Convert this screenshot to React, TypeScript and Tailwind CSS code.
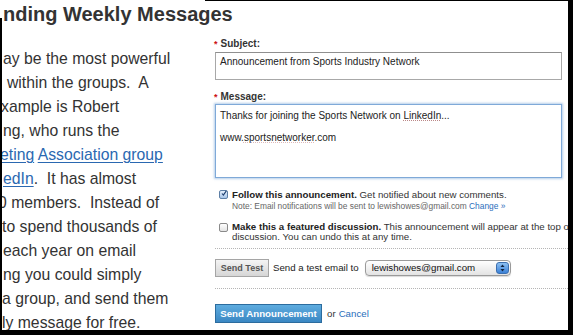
import React from "react";

const sans = { fontFamily: '"Liberation Sans", Arial, Helvetica, sans-serif' };

function Line({ ml, children }: { ml: string; children: React.ReactNode }) {
  return <div className={`whitespace-nowrap ${ml}`}>{children}</div>;
}

export default function App() {
  const link = "text-[#2a68b1] underline decoration-[1px] underline-offset-[2px]";
  return (
    <div className="w-[573px] h-[335px] bg-black pr-[5px] pb-[5px]" style={sans}>
      <div className="w-full h-full bg-white flex text-[#333]">
        {/* Left column */}
        <div className="w-[205px] shrink-0 flex flex-col">
          <div className="h-[18px] pl-[3px] pt-[4px] whitespace-nowrap text-[20px] leading-[20px] font-bold text-[#333]">
            nding Weekly Messages
          </div>
          <div className="flex-1 border-l-2 border-black overflow-hidden pt-[29px] text-[15.75px] leading-[24px] text-[#333]">
            <Line ml="ml-[1px]">ay be the most powerful</Line>
            <Line ml="ml-[5px]">within the groups.&nbsp; A</Line>
            <Line ml="-ml-[1px]">xample is Robert</Line>
            <Line ml="ml-[1px]">ng, who runs the</Line>
            <Line ml="-ml-[2px]">
              <a className={link}>eting</a> <a className={link}>Association group</a>
            </Line>
            <Line ml="ml-[1px]">
              <a className={link}>edIn</a>.&nbsp; It has almost
            </Line>
            <Line ml="-ml-[4px]">0 members.&nbsp; Instead of</Line>
            <Line ml="ml-[0px]">to spend thousands of</Line>
            <Line ml="ml-[1px]">each year on email</Line>
            <Line ml="ml-[1px]">ng you could simply</Line>
            <Line ml="ml-[0px]">a group, and send them</Line>
            <Line ml="ml-[0px]">ly message for free.</Line>
          </div>
        </div>

        {/* Right column */}
        <div className="flex-1 min-w-0 border-t border-black overflow-hidden pl-[10px] pr-[6px] pt-[37px] flex flex-col text-[9.7px] leading-[12px]">
          <div className="flex items-baseline -ml-[1px] text-[10px]">
            <span className="text-[#cc1111] text-[9px] mr-[3px] font-bold">*</span>
            <span className="font-bold text-[#333]">Subject:</span>
          </div>
          <div className="mt-[2px] h-[28px] border border-[#a8a8a8] border-t-[#8f8f8f] px-[4px] pt-[3px] text-[10px] text-[#222]">
            Announcement from Sports Industry Network
          </div>

          <div className="mt-[11px] flex items-baseline -ml-[1px] text-[10px]">
            <span className="text-[#cc1111] text-[9px] mr-[3px] font-bold">*</span>
            <span className="font-bold text-[#333]">Message:</span>
          </div>
          <div className="mt-[1px] h-[74px] border border-[#7fa9d8] shadow-[0_0_2px_1px_rgba(120,165,215,0.55)] px-[4px] pt-[5px] text-[10px] leading-[11px] text-[#222]">
            <div>
              Thanks for joining the Sports Network on{" "}
              <span className="underline decoration-dotted decoration-[#b88]">LinkedIn</span>...
            </div>
            <div className="h-[11px]" />
            <div>
              www.<span className="underline decoration-dotted decoration-[#dbb]">sportsnetworker</span>.com
            </div>
          </div>

          {/* Follow checkbox */}
          <div className="mt-[11px] flex">
            <div className="ml-[4px] mt-[1px] w-[9px] h-[9px] shrink-0 rounded-[2px] border border-[#5d7fa6] bg-gradient-to-b from-[#e6f0fb] to-[#a9c6e8] flex items-center justify-center">
              <svg width="9" height="9" viewBox="0 0 9 9" className="-mt-[2px] ml-[1px]">
                <path d="M1.5 4.5 L3.6 7 L8 0.5" stroke="#1c3d6e" strokeWidth="1.6" fill="none" />
              </svg>
            </div>
            <div className="ml-[4px] whitespace-nowrap">
              <div className="leading-[12px]">
                <span className="font-bold text-[#222]">Follow this announcement.</span>{" "}
                <span className="text-[#333]">Get notified about new comments.</span>
              </div>
              <div className="text-[8.4px] leading-[10px] text-[#666]">
                Note: Email notifications will be sent to lewishowes@gmail.com{" "}
                <span className="text-[#2a6ebb]">Change »</span>
              </div>
            </div>
          </div>

          {/* Featured checkbox */}
          <div className="mt-[11px] flex">
            <div className="ml-[4px] mt-[1px] w-[9px] h-[9px] shrink-0 rounded-[2px] border border-[#8a8a8a] bg-gradient-to-b from-white to-[#e4e4e4]" />
            <div className="ml-[4px] whitespace-nowrap leading-[10px]">
              <div>
                <span className="font-bold text-[#222]">Make this a featured discussion.</span>{" "}
                <span className="text-[#333]">This announcement will appear at the top of the</span>
              </div>
              <div className="text-[#333]">discussion. You can undo this at any time.</div>
            </div>
          </div>

          <div className="mt-[6px] -mr-[10px] border-t border-dotted border-[#b5b5b5]" />

          {/* Send test row */}
          <div className="mt-[10px] flex items-center h-[18px]">
            <div className="h-[18px] w-[54px] shrink-0 border border-[#a5a5a5] bg-gradient-to-b from-[#f4f4f4] to-[#d6d6d6] flex items-center justify-center text-[9px] font-bold text-[#555]">
              Send Test
            </div>
            <span className="ml-[4px] whitespace-nowrap text-[#222]">Send a test email to</span>
            <div className="ml-[6px] h-[16px] w-[146px] shrink-0 rounded-[4px] border border-[#9a9a9a] bg-gradient-to-b from-white to-[#e3e3e3] flex items-center pl-[6px] pr-[1px] shadow-[0_1px_1px_rgba(0,0,0,0.15)]">
              <span className="flex-1 text-[#111]">lewishowes@gmail.com</span>
              <div className="w-[13px] h-[12px] rounded-[3px] bg-gradient-to-b from-[#8cc0f2] to-[#3a80d6] border border-[#3b6fb0] flex items-center justify-center">
                <svg width="7" height="10" viewBox="0 0 7 10">
                  <path d="M1.5 4 L3.5 1.5 L5.5 4 Z" fill="#10233f" />
                  <path d="M1.5 6 L3.5 8.5 L5.5 6 Z" fill="#10233f" />
                </svg>
              </div>
            </div>
          </div>

          <div className="mt-[11px] -mr-[10px] border-t border-dotted border-[#b5b5b5]" />

          {/* Send announcement row */}
          <div className="mt-[15px] flex items-center">
            <div className="h-[19px] w-[107px] shrink-0 border border-[#2c6c9e] bg-gradient-to-b from-[#5eacdf] to-[#3a87c3] flex items-center justify-center font-bold text-white">
              Send Announcement
            </div>
            <span className="ml-[5px] text-[#333]">or</span>
            <span className="ml-[3px] text-[#2a6ebb]">Cancel</span>
          </div>
        </div>
      </div>
    </div>
  );
}
